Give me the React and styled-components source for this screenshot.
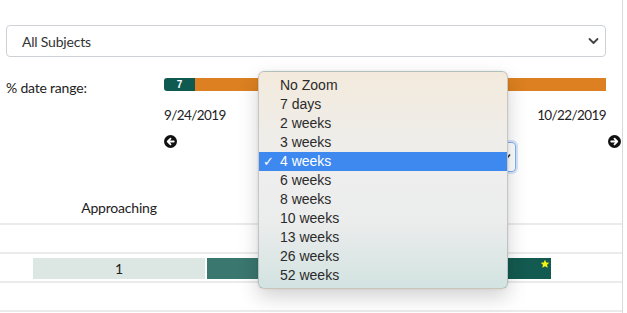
import React from "react";
import styled, { createGlobalStyle } from "styled-components";

const Global = createGlobalStyle`
  html, body { margin: 0; padding: 0; background: #fff; }
  body { font-family: Lato, "Open Sans", sans-serif; color: #212529; }
  * { box-sizing: border-box; }
`;

const Page = styled.div`
  position: relative;
  width: 623px;
  min-height: 313px;
  border-right: 1px solid #d9d9d9;
  overflow: hidden;
`;

const Top = styled.div`
  padding: 25px 16px 0 6px;
`;

const SubjectSelect = styled.div`
  height: 32px;
  width: 600px;
  border: 1px solid #cdd1d5;
  border-radius: 4px;
  display: flex;
  align-items: center;
  justify-content: space-between;
  padding: 0 6px 0 15px;
  font-size: 14px;
  letter-spacing: -0.2px;
  color: #333;
`;

const RangeRow = styled.div`
  display: flex;
  margin-top: 21px;
`;

const RangeLabel = styled.div`
  width: 158px;
  font-size: 14px;
  letter-spacing: -0.2px;
  line-height: 20px;
  color: #222;
`;

const RangeCol = styled.div`
  width: 442px;
`;

const Bar = styled.div`
  display: flex;
  height: 13px;
  border-radius: 3px 0 0 3px;
  overflow: hidden;
`;

const Seg = styled.div`
  background: ${(p) => p.$color};
  width: ${(p) => (p.$w ? p.$w + "px" : "auto")};
  flex: ${(p) => (p.$w ? "none" : "1")};
  color: #fff;
  font-size: 10px;
  font-weight: 700;
  line-height: 13px;
  text-align: center;
  font-family: "Liberation Sans", sans-serif;
`;

const Dates = styled.div`
  display: flex;
  justify-content: space-between;
  margin-top: 16px;
  font-size: 13.5px;
  letter-spacing: -0.6px;
  line-height: 17px;
  color: #222;
`;

const NavRow = styled.div`
  display: flex;
  justify-content: space-between;
  align-items: flex-start;
  margin-top: 11px;
  margin-right: -15px;
`;

const ArrowIcon = styled.svg`
  width: 13px;
  height: 13px;
  display: block;
`;

const ZoomSelect = styled.div`
  margin-top: 7px;
  width: 247px;
  height: 30px;
  border: 1px solid #7fb0ef;
  border-radius: 4px;
  box-shadow: 0 0 0 2px rgba(120, 170, 240, 0.3);
  display: flex;
  align-items: center;
  justify-content: flex-end;
  padding-right: 4px;
`;

const Table = styled.div`
  width: 622px;
`;

const HeaderRow = styled.div`
  display: grid;
  grid-template-columns: 33px 172px 1fr;
  height: 53px;
  border-bottom: 2px solid #ebebeb;
`;

const HeaderCell = styled.div`
  grid-column: ${(p) => p.$col};
  display: flex;
  align-items: flex-end;
  justify-content: center;
  padding-bottom: 7px;
  font-size: 14px;
  letter-spacing: -0.2px;
  line-height: 17px;
  color: #222;
`;

const Row = styled.div`
  height: 29px;
  border-bottom: 2px solid #ebebeb;
  display: flex;
  align-items: flex-start;
  padding: 4px 0 0 33px;
`;

const Cell = styled.div`
  position: relative;
  height: 21px;
  width: ${(p) => p.$w}px;
  margin-right: 2px;
  background: ${(p) => p.$bg};
  color: #222;
  font-size: 14px;
  line-height: 21px;
  text-align: center;
`;

const Star = styled.svg`
  position: absolute;
  top: 1px;
  right: 1px;
  width: 10px;
  height: 10px;
`;

const Popup = styled.div`
  position: absolute;
  left: 258px;
  top: 71px;
  width: 250px;
  height: 218px;
  padding-top: 4px;
  border: 1px solid rgba(0, 0, 0, 0.16);
  border-radius: 6px;
  background: linear-gradient(
    180deg,
    #f3eadc 0%,
    #efede9 30%,
    #eeeeee 50%,
    #ebecec 70%,
    #d2e3e1 100%
  );
  box-shadow: 0 8px 20px rgba(0, 0, 0, 0.18), 0 0 3px rgba(0, 0, 0, 0.08);
  font-family: "Liberation Sans", Arial, sans-serif;
  font-size: 14px;
  overflow: hidden;
`;

const Option = styled.div`
  position: relative;
  height: 19px;
  line-height: 19px;
  padding-left: 21px;
  color: ${(p) => (p.$active ? "#fff" : "#2b2b2b")};
  background: ${(p) => (p.$active ? "#3d89f0" : "transparent")};
`;

const Check = styled.span`
  position: absolute;
  left: 4px;
  top: 0;
  font-size: 13px;
`;

const options = [
  "No Zoom",
  "7 days",
  "2 weeks",
  "3 weeks",
  "4 weeks",
  "6 weeks",
  "8 weeks",
  "10 weeks",
  "13 weeks",
  "26 weeks",
  "52 weeks",
];

const CircleArrow = ({ dir }) => (
  <ArrowIcon viewBox="0 0 16 16">
    <circle cx="8" cy="8" r="8" fill="#111" />
    {dir === "left" ? (
      <path
        d="M12 8H5M8 4.6L4.6 8 8 11.4"
        stroke="#fff"
        strokeWidth="2.2"
        fill="none"
        strokeLinecap="round"
        strokeLinejoin="round"
      />
    ) : (
      <path
        d="M4 8h7M8 4.6L11.4 8 8 11.4"
        stroke="#fff"
        strokeWidth="2.2"
        fill="none"
        strokeLinecap="round"
        strokeLinejoin="round"
      />
    )}
  </ArrowIcon>
);

export default function App() {
  return (
    <>
      <Global />
      <Page>
        <Top>
          <SubjectSelect>
            <span>All Subjects</span>
            <svg width="11" height="8" viewBox="0 0 11 8">
              <path
                d="M1.5 2l4 4 4-4"
                stroke="#444"
                strokeWidth="1.8"
                fill="none"
                strokeLinecap="round"
                strokeLinejoin="round"
              />
            </svg>
          </SubjectSelect>
          <RangeRow>
            <RangeLabel>% date range:</RangeLabel>
            <RangeCol>
              <Bar>
                <Seg $color="#0f5a50" $w={31}>7</Seg>
                <Seg $color="#dc8021" />
              </Bar>
              <Dates>
                <span>9/24/2019</span>
                <span>10/22/2019</span>
              </Dates>
              <NavRow>
                <CircleArrow dir="left" />
                <ZoomSelect>
                  <svg width="6" height="8" viewBox="0 0 6 8">
                    <path d="M1 6.5L5 1.5" stroke="#333" strokeWidth="1.6" />
                  </svg>
                </ZoomSelect>
                <CircleArrow dir="right" />
              </NavRow>
            </RangeCol>
          </RangeRow>
        </Top>
        <Table>
          <HeaderRow>
            <HeaderCell $col={2}>Approaching</HeaderCell>
          </HeaderRow>
          <Row />
          <Row>
            <Cell $w={172} $bg="#dce6e3">1</Cell>
            <Cell $w={173} $bg="#3a776e" />
            <Cell $w={169} $bg="#135a50">
              <Star viewBox="0 0 24 24">
                <path
                  d="M12 1.5l3.1 6.6 7.2.9-5.3 5 1.4 7.1L12 17.6 5.6 21.1 7 14l-5.3-5 7.2-.9z"
                  fill="#f5f214"
                />
              </Star>
            </Cell>
          </Row>
          <Row />
        </Table>
        <Popup>
          {options.map((o) => (
            <Option key={o} $active={o === "4 weeks"}>
              {o === "4 weeks" && <Check>✓</Check>}
              {o}
            </Option>
          ))}
        </Popup>
      </Page>
    </>
  );
}
